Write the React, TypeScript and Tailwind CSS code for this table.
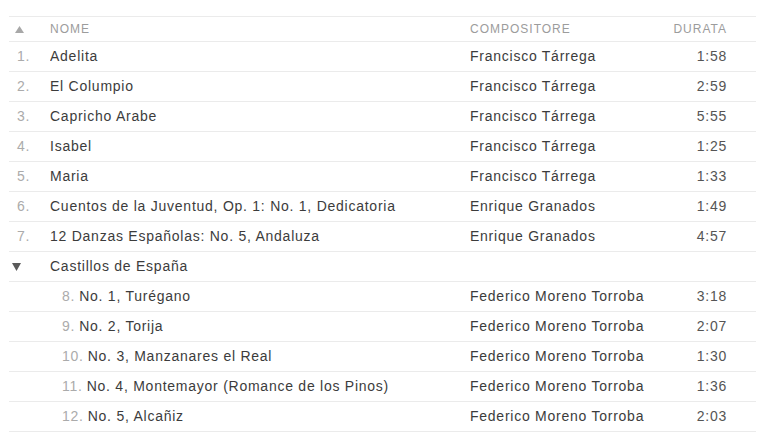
import React from 'react';

type Track = { n: number; name: string; composer: string; time: string };

const tracks: Track[] = [
  { n: 1, name: 'Adelita', composer: 'Francisco Tárrega', time: '1:58' },
  { n: 2, name: 'El Columpio', composer: 'Francisco Tárrega', time: '2:59' },
  { n: 3, name: 'Capricho Arabe', composer: 'Francisco Tárrega', time: '5:55' },
  { n: 4, name: 'Isabel', composer: 'Francisco Tárrega', time: '1:25' },
  { n: 5, name: 'Maria', composer: 'Francisco Tárrega', time: '1:33' },
  { n: 6, name: 'Cuentos de la Juventud, Op. 1: No. 1, Dedicatoria', composer: 'Enrique Granados', time: '1:49' },
  { n: 7, name: '12 Danzas Españolas: No. 5, Andaluza', composer: 'Enrique Granados', time: '4:57' },
];

const castillos: Track[] = [
  { n: 8, name: 'No. 1, Turégano', composer: 'Federico Moreno Torroba', time: '3:18' },
  { n: 9, name: 'No. 2, Torija', composer: 'Federico Moreno Torroba', time: '2:07' },
  { n: 10, name: 'No. 3, Manzanares el Real', composer: 'Federico Moreno Torroba', time: '1:30' },
  { n: 11, name: 'No. 4, Montemayor (Romance de los Pinos)', composer: 'Federico Moreno Torroba', time: '1:36' },
  { n: 12, name: 'No. 5, Alcañiz', composer: 'Federico Moreno Torroba', time: '2:03' },
];

function Row({ t }: { t: Track }) {
  return (
    <div className="flex items-center h-[30px] border-b border-[#ebebeb]">
      <div className="w-[41px] pl-[8px] text-[#ababab]">{t.n}.</div>
      <div className="w-[420px] text-[#3c3c3c] truncate">{t.name}</div>
      <div className="w-[190px] text-[#3c3c3c]">{t.composer}</div>
      <div className="w-[67px] text-right text-[#555]">{t.time}</div>
    </div>
  );
}

function SubRow({ t }: { t: Track }) {
  return (
    <div className="flex items-center h-[30px] border-b border-[#ebebeb]">
      <div className="w-[53px]" />
      <div className="w-[408px] text-[#3c3c3c] truncate">
        <span className="text-[#ababab] mr-[4px]">{t.n}.</span>
        {t.name}
      </div>
      <div className="w-[190px] text-[#3c3c3c]">{t.composer}</div>
      <div className="w-[67px] text-right text-[#555]">{t.time}</div>
    </div>
  );
}

export default function App() {
  return (
    <div className="w-[765px] h-[442px] bg-white overflow-hidden pt-[16px] pl-[9px] pr-[9px] font-['Liberation_Sans',Arial,sans-serif] text-[14px] tracking-[0.75px]">
      <div className="border-t border-[#ebebeb]">
        <div className="flex items-center h-[25px] border-b border-[#ebebeb] text-[12px] tracking-[1px] text-[#9c9c9c] uppercase">
          <div className="w-[41px] pl-[6px]">
            <svg width="9" height="7" viewBox="0 0 9 7">
              <polygon points="4.5,0 9,7 0,7" fill="#a8a8a8" />
            </svg>
          </div>
          <div className="w-[420px]">Nome</div>
          <div className="w-[190px]">Compositore</div>
          <div className="w-[67px] text-right">Durata</div>
        </div>
        {tracks.map((t) => (
          <Row key={t.n} t={t} />
        ))}
        <div className="flex items-center h-[30px] border-b border-[#ebebeb]">
          <div className="w-[41px] pl-[3px]">
            <svg width="9" height="8" viewBox="0 0 9 8">
              <polygon points="0,0 9,0 4.5,8" fill="#5a5a5a" />
            </svg>
          </div>
          <div className="text-[#3c3c3c]">Castillos de España</div>
        </div>
        {castillos.map((t) => (
          <SubRow key={t.n} t={t} />
        ))}
      </div>
    </div>
  );
}
